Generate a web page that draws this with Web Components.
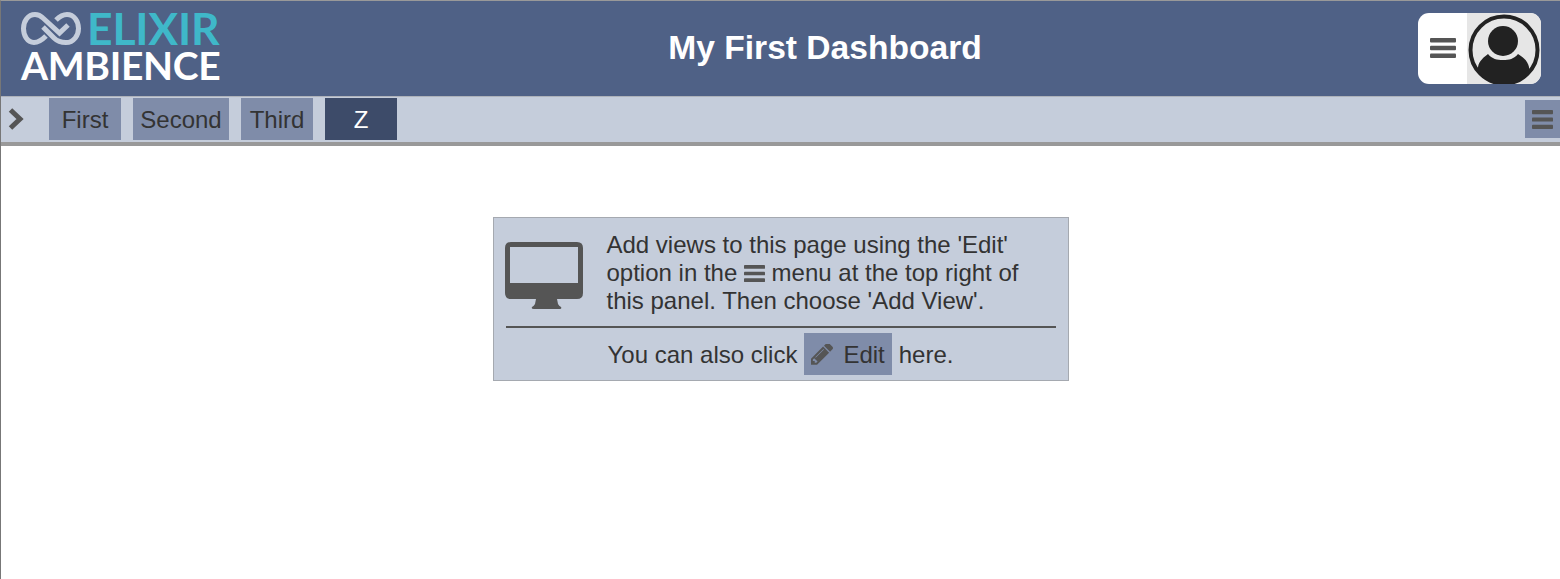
<!DOCTYPE html>
<html>
<head>
<meta charset="utf-8">
<title>My First Dashboard</title>
<style>
  html, body { margin:0; height:100%; background:#fff; }
  body { font-family:"Liberation Sans", Arial, sans-serif; color:#333; }
</style>
</head>
<body>
<elx-app>
  <elx-header slot="header" title="My First Dashboard"></elx-header>
  <elx-tabbar slot="tabs">
    <elx-tab>First</elx-tab>
    <elx-tab style="--tab-width:96px">Second</elx-tab>
    <elx-tab>Third</elx-tab>
    <elx-tab active>Z</elx-tab>
  </elx-tabbar>
  <elx-empty-panel>
    Add views to this page using the 'Edit' option in the <elx-bars-icon></elx-bars-icon> menu at the top right of this panel. Then choose 'Add View'.
  </elx-empty-panel>
</elx-app>

<script>
// bars icon is used in three places so it gets its own element
class ElxBarsIcon extends HTMLElement {
  constructor() {
    super();
    this.attachShadow({mode:'open'}).innerHTML = `<style>
      :host { display:inline-block; width:var(--bars-w,21px); height:var(--bars-h,17px); vertical-align:-1px; }
      svg { display:block; width:100%; height:100%; fill:var(--bars-color,#555); }
    </style>
    <svg viewBox="0 0 26 20" preserveAspectRatio="none">
      <rect width="26" height="4.4" rx="1"/><rect y="7.8" width="26" height="4.4" rx="1"/><rect y="15.6" width="26" height="4.4" rx="1"/>
    </svg>`;
  }
}
customElements.define('elx-bars-icon', ElxBarsIcon);

class ElxApp extends HTMLElement {
  constructor() {
    super();
    this.attachShadow({mode:'open'}).innerHTML = `<style>
      :host { display:block; box-sizing:border-box; height:579px; overflow:hidden; border-left:1px solid #777; border-top:1px solid #999; }
      main { display:flex; justify-content:center; padding-top:71px; }
    </style>
    <slot name="header"></slot>
    <slot name="tabs"></slot>
    <main><slot></slot></main>`;
  }
}
customElements.define('elx-app', ElxApp);

class ElxHeader extends HTMLElement {
  constructor() {
    super();
    this.attachShadow({mode:'open'}).innerHTML = `<style>
      :host { display:flex; align-items:center; height:95px; background:#4f6186; padding:0 19px 0 20px; }
      .logo { width:211px; align-self:flex-start; margin-top:8px; display:flex; flex-direction:column; font-family:Lato, sans-serif; font-weight:700; flex:none; }
      .top { display:flex; align-items:center; height:38px; }
      .top svg { width:60px; height:33px; flex:none; margin-right:6px; }
      .elixir { color:#3fb8c9; font-size:44.5px; line-height:38px; letter-spacing:-.2px; }
      .ambience { color:#fff; font-size:39px; line-height:34px; letter-spacing:-.3px; margin-top:1px; white-space:nowrap; }
      h1 { flex:1; margin:-2px 0 0; text-align:center; color:#fff; font-size:33.6px; font-weight:700; }
      .user { display:flex; width:123px; height:71px; border-radius:11px; overflow:hidden; background:#fff; flex:none; margin-top:-1px; }
      .menu { width:49px; display:flex; align-items:center; justify-content:center; flex:none; --bars-w:26px; --bars-h:20px; }
      .face { width:74px; height:71px; background:#e6e6e6; flex:none; }
      .face svg { display:block; width:74px; height:71px; }
    </style>
    <div class="logo">
      <div class="top">
        <svg viewBox="0 0 60 33" fill="none" stroke="#c5cddb" stroke-width="5">
          <path d="M25 24 C21 28 17 30.5 13 30.5 C6 30.5 2.5 23 2.5 16.5 C2.5 9 7 2.5 14 2.5 C18 2.5 20 4 22 6 L38.5 21 L47 13"/>
          <path d="M22 15 L33 26 C36 29 40 30.5 45 30.5 C53 30.5 57.5 23 57.5 16.5 C57.5 9 53 2.5 46 2.5 C42 2.5 38 5 35 8"/>
        </svg>
        <span class="elixir">ELIXIR</span>
      </div>
      <div class="ambience">AMBIENCE</div>
    </div>
    <h1></h1>
    <div class="user">
      <div class="menu"><elx-bars-icon></elx-bars-icon></div>
      <div class="face">
        <svg viewBox="0 0 74 71">
          <defs><clipPath id="inner"><circle cx="37" cy="37" r="34"/></clipPath></defs>
          <circle cx="37" cy="37" r="33.5" fill="none" stroke="#222" stroke-width="4"/>
          <circle cx="36" cy="28" r="15" fill="#222"/>
          <path clip-path="url(#inner)" fill="#222" d="M11 71 V54 C12 48 17 44 21 41 C25 46 30 47 36 47 C42 47 47 46 51 41 C56 44 61 48 62 54 V71 Z"/>
        </svg>
      </div>
    </div>`;
  }
  connectedCallback() {
    this.shadowRoot.querySelector('h1').textContent = this.getAttribute('title');
  }
}
customElements.define('elx-header', ElxHeader);

class ElxTabbar extends HTMLElement {
  constructor() {
    super();
    this.attachShadow({mode:'open'}).innerHTML = `<style>
      :host { display:flex; align-items:flex-start; height:45px; background:#c5cddb; border-top:1px solid #aeb2ba; border-bottom:4px solid #999; }
      .toggle { width:48px; height:44px; flex:none; }
      .toggle svg { display:block; margin:10px 0 0 7px; width:16px; height:24px; }
      .tabs { display:flex; gap:12px; flex:1; padding-top:1px; }
      .more { width:35px; height:38px; margin-top:3px; background:#7f8ca9; display:flex; align-items:center; justify-content:center; flex:none; --bars-w:21px; --bars-h:19px; }
    </style>
    <div class="toggle">
      <svg viewBox="0 0 16 24"><polyline points="2.5,3 12,12 2.5,21" fill="none" stroke="#555" stroke-width="5"/></svg>
    </div>
    <div class="tabs"><slot></slot></div>
    <div class="more"><elx-bars-icon></elx-bars-icon></div>`;
  }
}
customElements.define('elx-tabbar', ElxTabbar);

class ElxTab extends HTMLElement {
  constructor() {
    super();
    this.attachShadow({mode:'open'}).innerHTML = `<style>
      :host { display:flex; align-items:center; justify-content:center; box-sizing:border-box; padding-top:2px; width:var(--tab-width,72px); height:42px; background:#7f8ca9; color:#333; font-size:24px; }
      :host([active]) { background:#3d4b69; color:#fff; }
    </style><slot></slot>`;
  }
}
customElements.define('elx-tab', ElxTab);

class ElxEditButton extends HTMLElement {
  constructor() {
    super();
    this.attachShadow({mode:'open'}).innerHTML = `<style>
      :host { display:flex; align-items:center; box-sizing:border-box; height:42px; padding:2px 7px 0; background:#7f8ca9; }
      svg { width:22px; height:21px; margin:-2px 10px 0 0; fill:#555; flex:none; }
    </style>
    <svg viewBox="128 256 1515 1408"><path d="M491 1536l91-91-235-235-91 91v107h128v128h107zm523-928q0-22-22-22-10 0-17 7l-542 542q-7 7-7 17 0 22 22 22 10 0 17-7l542-542q7-7 7-17zm-54-192l416 416-832 832h-416v-416zm683 96q0 53-37 90l-166 166-416-416 166-165q36-38 90-38 53 0 91 38l235 234q37 39 37 91z"/></svg>
    <slot></slot>`;
  }
}
customElements.define('elx-edit-button', ElxEditButton);

class ElxEmptyPanel extends HTMLElement {
  constructor() {
    super();
    this.attachShadow({mode:'open'}).innerHTML = `<style>
      :host { display:block; box-sizing:border-box; width:576px; height:164px; background:#c5cddb; border:1px solid #a5a9b0; font-size:24px; line-height:28px; color:#333; }
      .top { display:flex; padding:13px 0 0 11px; }
      .top svg { width:78px; height:67px; margin:11px 24px 0 0; flex:none; fill:#555; }
      .msg { width:440px; }
      hr { height:2px; border:0; background:#555; margin:11px 12px 5px 12px; }
      .also { display:flex; align-items:center; gap:7px; padding-left:114px; }
      .also span { padding-top:2px; }
    </style>
    <div class="top">
      <svg viewBox="0 0 78 67"><path fill-rule="evenodd" d="M6 0H72Q78 0 78 6V51Q78 57 72 57H52L53 62Q54 64 56 65Q57 67 55 67H29Q26 67 27 65Q29 64 30 62L31 57H6Q0 57 0 51V6Q0 0 6 0ZM5 5V41H73V5Z"/></svg>
      <div class="msg"><slot></slot></div>
    </div>
    <hr>
    <div class="also">
      <span>You can also click</span>
      <elx-edit-button>Edit</elx-edit-button>
      <span>here.</span>
    </div>`;
  }
}
customElements.define('elx-empty-panel', ElxEmptyPanel);
</script>
</body>
</html>
